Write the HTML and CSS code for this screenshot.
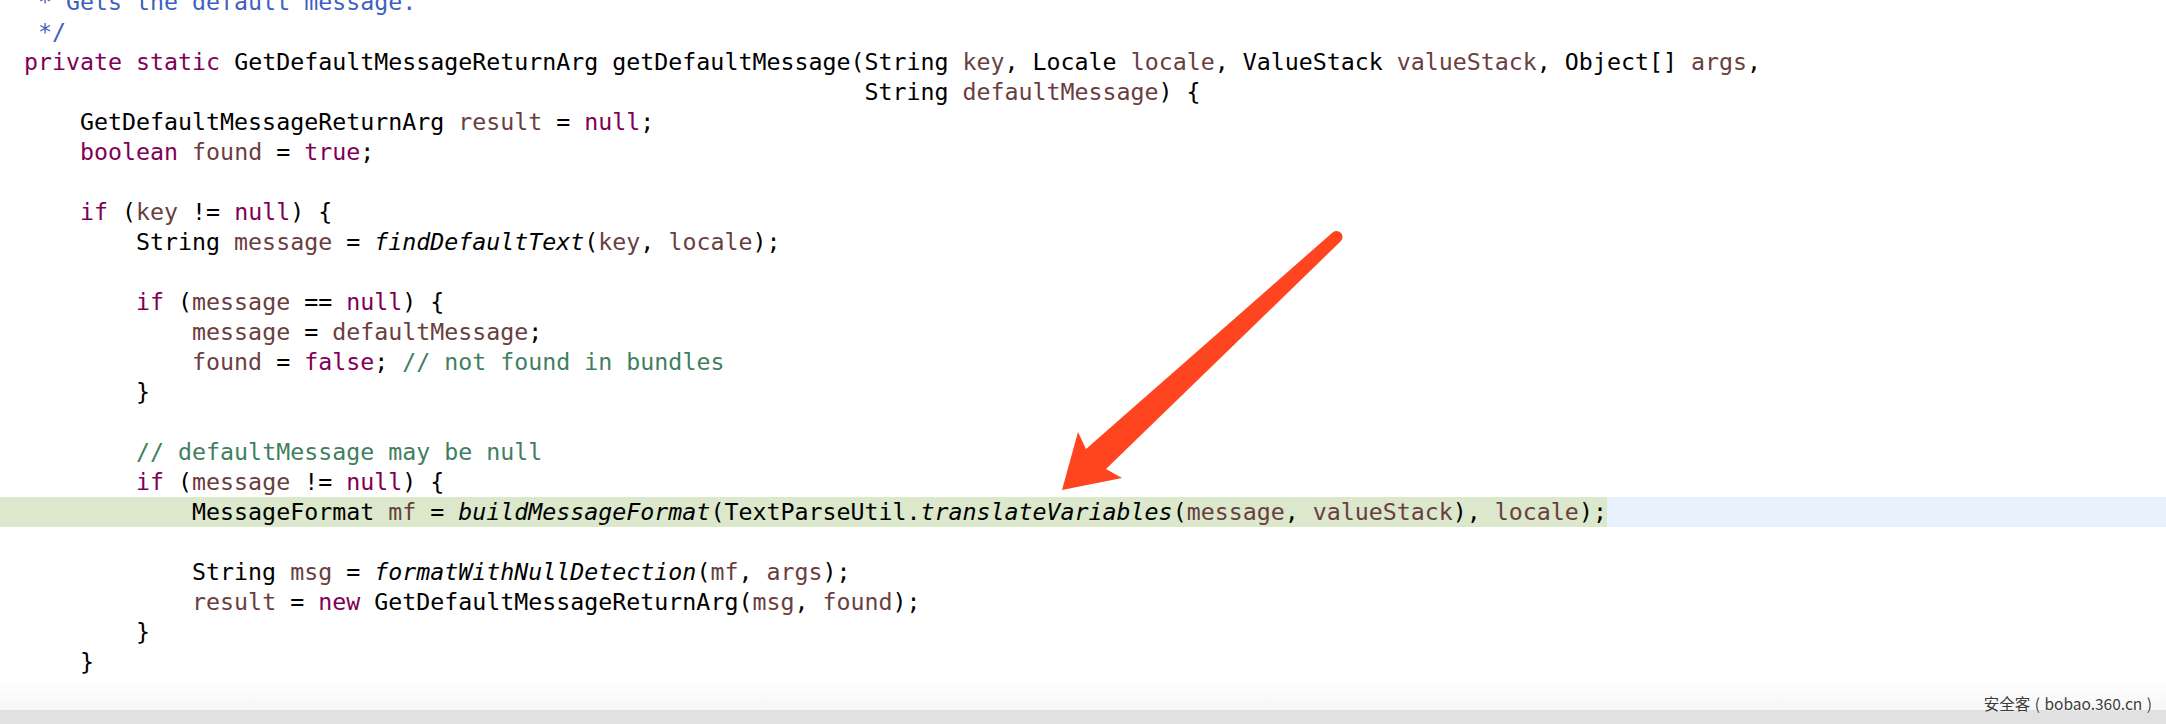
FILE: index.html
```html
<!DOCTYPE html>
<html lang="en">
<head>
  <meta charset="UTF-8">
  <title>getDefaultMessage</title>
  <meta name="viewport" content="width=device-width, initial-scale=1.0">
  <link rel="stylesheet" href="styles.css">
</head>
<body>

  <!-- Editor -->
  <div class="editor">
    <div class="code-area">
      <div class="code">
        <div class="line"><span class="doc"> * Gets the default message.</span></div>
        <div class="line"><span class="doc"> */</span></div>
        <div class="line"><span class="kw">private</span> <span class="kw">static</span> GetDefaultMessageReturnArg getDefaultMessage(String <span class="var">key</span>, Locale <span class="var">locale</span>, ValueStack <span class="var">valueStack</span>, Object[] <span class="var">args</span>,</div>
        <div class="line">                                                            String <span class="var">defaultMessage</span>) {</div>
        <div class="line">    GetDefaultMessageReturnArg <span class="var">result</span> = <span class="kw">null</span>;</div>
        <div class="line">    <span class="kw">boolean</span> <span class="var">found</span> = <span class="kw">true</span>;</div>
        <div class="line"></div>
        <div class="line">    <span class="kw">if</span> (<span class="var">key</span> != <span class="kw">null</span>) {</div>
        <div class="line">        String <span class="var">message</span> = <span class="call">findDefaultText</span>(<span class="var">key</span>, <span class="var">locale</span>);</div>
        <div class="line"></div>
        <div class="line">        <span class="kw">if</span> (<span class="var">message</span> == <span class="kw">null</span>) {</div>
        <div class="line">            <span class="var">message</span> = <span class="var">defaultMessage</span>;</div>
        <div class="line">            <span class="var">found</span> = <span class="kw">false</span>; <span class="comment">// not found in bundles</span></div>
        <div class="line">        }</div>
        <div class="line"></div>
        <div class="line">        <span class="comment">// defaultMessage may be null</span></div>
        <div class="line">        <span class="kw">if</span> (<span class="var">message</span> != <span class="kw">null</span>) {</div>
        <div class="line current"><span class="sel">            MessageFormat <span class="var">mf</span> = <span class="call">buildMessageFormat</span>(TextParseUtil.<span class="call">translateVariables</span>(<span class="var">message</span>, <span class="var">valueStack</span>), <span class="var">locale</span>);</span></div>
        <div class="line"></div>
        <div class="line">            String <span class="var">msg</span> = <span class="call">formatWithNullDetection</span>(<span class="var">mf</span>, <span class="var">args</span>);</div>
        <div class="line">            <span class="var">result</span> = <span class="kw">new</span> GetDefaultMessageReturnArg(<span class="var">msg</span>, <span class="var">found</span>);</div>
        <div class="line">        }</div>
        <div class="line">    }</div>
      </div>
    </div>
    <div class="hscroll"></div>
  </div>

  <!-- Arrow annotation -->
  <svg class="arrow" width="2166" height="724" viewBox="0 0 2166 724">
    <path d="M1106 469 L1341 241 A6 6 0 0 0 1332 233 L1086 449 L1078 432 L1062 490 L1122 478 Z" fill="#ff4520"/>
  </svg>

  <!-- Watermark -->
  <div class="watermark">安全客 ( bobao.360.cn )</div>

</body>
</html>
```

FILE: styles.css
```css
body {
  margin: 0;
  background-color: #ffffff;
  overflow: hidden;
}

.editor {
  height: 724px;
  display: flex;
  flex-direction: column;
}

.code-area {
  flex: 1;
  overflow: hidden;
  background: linear-gradient(to bottom, #ffffff calc(100% - 30px), #f6f6f6 100%);
}

.code {
  margin-top: -13px;
  font-family: "DejaVu Sans Mono", monospace;
  font-size: 23.28px;
  line-height: 30px;
  color: #000000;
}

.line {
  height: 30px;
  padding-left: 24px;
  white-space: pre;
}

.line.current {
  background-color: #e8f2fe;
}

.sel {
  display: inline-block;
  height: 30px;
  margin-left: -24px;
  padding-left: 24px;
  background-color: #dbe8cc;
}

.kw {
  color: #7f0055;
}

.var {
  color: #6a3e3e;
}

.doc {
  color: #3f5fbf;
}

.comment {
  color: #3f7f5f;
}

.call {
  font-style: italic;
}

.hscroll {
  height: 14px;
  background-color: #e1e1e1;
}

.arrow {
  position: absolute;
  top: 0;
  left: 0;
}

.watermark {
  position: absolute;
  right: 14px;
  bottom: 12px;
  font-family: "Noto Sans CJK SC", "Noto Sans", sans-serif;
  font-size: 15.5px;
  line-height: 17px;
  word-spacing: 1px;
  color: #3a3a3a;
  text-shadow: 0 0 2px #ffffff, 0 0 1px #ffffff;
}
```
